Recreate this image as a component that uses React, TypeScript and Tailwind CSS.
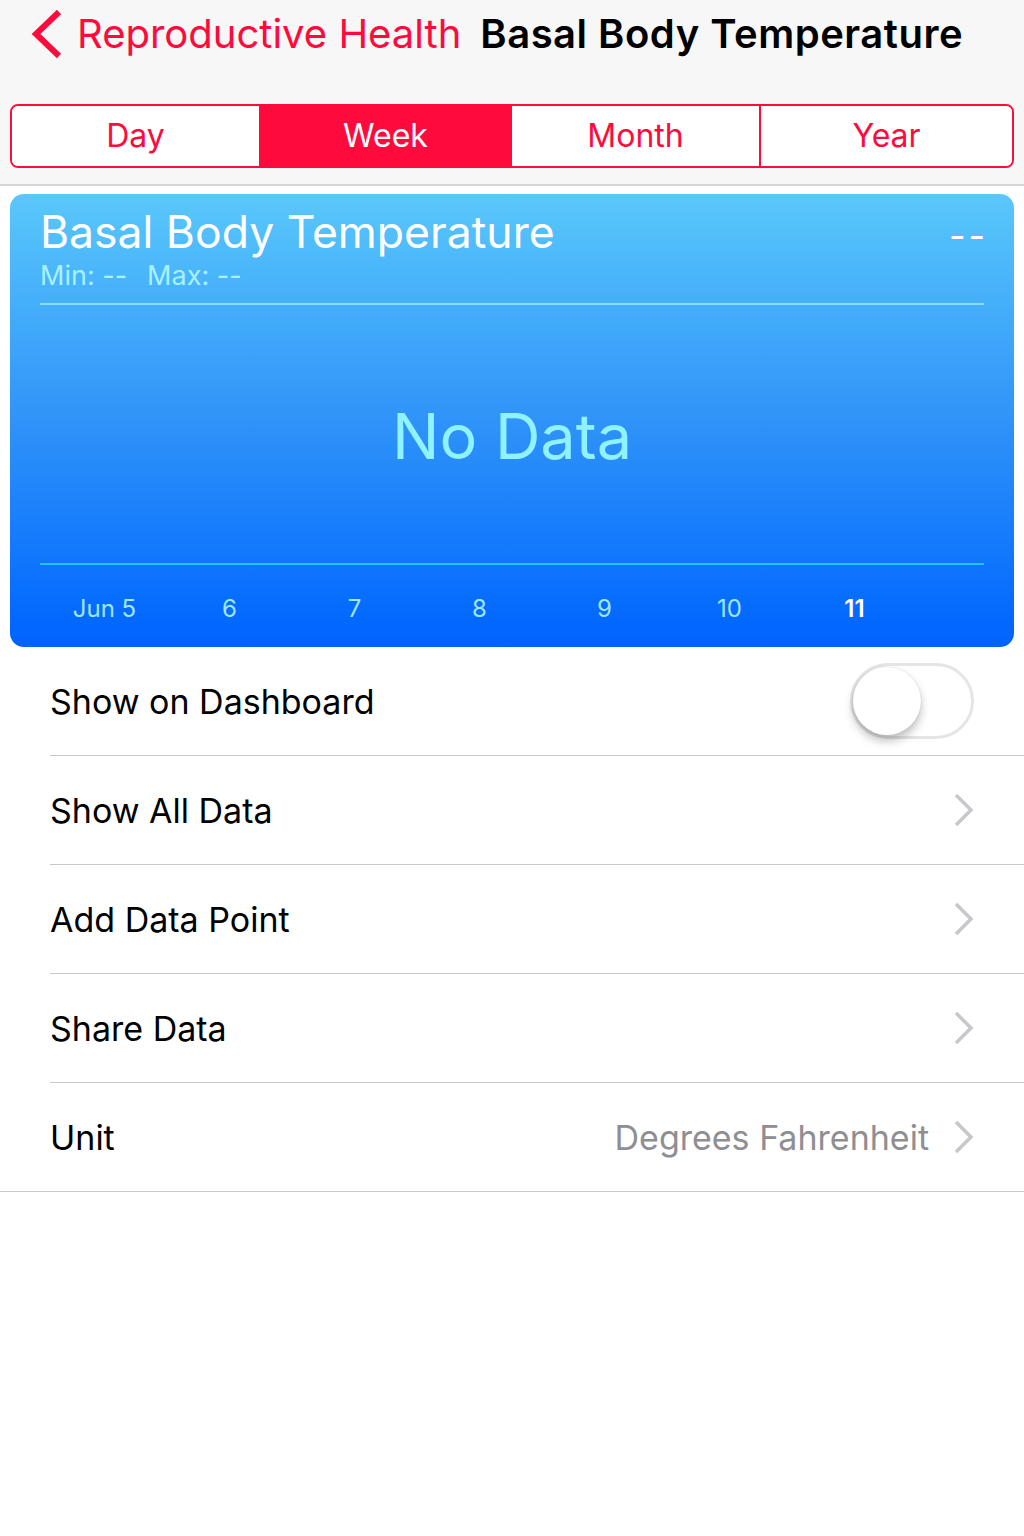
const FONT = { fontFamily: "Inter, 'Noto Sans', sans-serif" };

const days = ["Jun 5", "6", "7", "8", "9", "10", "11"];

function Chevron() {
  return (
    <svg width="22" height="34" viewBox="0 0 22 34" className="shrink-0">
      <path d="M3 2 L18 17 L3 32" fill="none" stroke="#c7c7cc" strokeWidth="3.5" />
    </svg>
  );
}

function Row({ label, value }: { label: string; value?: string }) {
  return (
    <div className="h-[109px] ml-[50px] flex items-center justify-between pr-[49px] border-b border-[#c8c7cc]">
      <span className="text-[34px] text-black">{label}</span>
      <div className="flex items-center gap-[24px]">
        {value && <span className="text-[34px] text-[#8e8e93]">{value}</span>}
        <Chevron />
      </div>
    </div>
  );
}

export default function App() {
  return (
    <div className="w-[1024px] h-[1536px] bg-white" style={FONT}>
      {/* Nav bar + segmented control */}
      <div className="bg-[#f7f7f7] border-b-2 border-[#d6d6d8] h-[186px]">
        <div className="flex items-center h-[68px] pl-[28px]">
          <svg width="36" height="52" viewBox="0 0 36 52" className="shrink-0">
            <path d="M31 4 L8 26 L31 48" fill="none" stroke="#ff0a3c" strokeWidth="6" />
          </svg>
          <span className="ml-[13px] text-[40px] text-[#ff0a3c]">Reproductive Health</span>
          <span className="ml-[19px] text-[40px] font-semibold text-black tracking-[0.5px]">Basal Body Temperature</span>
        </div>
        <div className="mx-[10px] mt-[36px] h-[64px] border-2 border-[#ff0a3c] rounded-[8px] overflow-hidden flex text-[32px] text-[#ff0a3c]">
          <div className="w-[247px] bg-white flex items-center justify-center">Day</div>
          <div className="w-[253px] bg-[#ff0a3c] text-white flex items-center justify-center">Week</div>
          <div className="w-[249px] bg-white flex items-center justify-center border-r-2 border-[#ff0a3c]">Month</div>
          <div className="flex-1 bg-white flex items-center justify-center">Year</div>
        </div>
      </div>

      {/* Chart card */}
      <div className="mx-[10px] mt-[8px] h-[453px] rounded-[14px] bg-gradient-to-b from-[#5ac8fb] via-[#2f93f8] to-[#0062ff] px-[30px] flex flex-col">
        <div className="flex justify-between items-start pt-[8px]">
          <span className="text-[44.5px] leading-[60px] text-white">Basal Body Temperature</span>
          <span className="text-[36px] leading-[60px] text-white mt-[4px] -mr-[4px] tracking-[3px]">--</span>
        </div>
        <div className="flex text-[27px] leading-[30px] text-[#a8f2ff] -mt-[5px]">
          <span>Min: --</span>
          <span className="ml-[20px]">Max: --</span>
        </div>
        <div className="mt-[12px] h-[2px] bg-[#8fdcff]" />
        <div className="flex-1 flex items-center justify-center pt-[4px]">
          <span className="text-[63px] text-[#8ef3ff]">No Data</span>
        </div>
        <div className="h-[2px] bg-[#22c4ff]" />
        <div className="flex pl-[2px] h-[82px] items-center pt-[6px]">
          {days.map((d, i) => (
            <div
              key={d}
              className={
                i === 6
                  ? "w-[125px] text-center text-[24px] text-white font-semibold"
                  : "w-[125px] text-center text-[24px] text-[#9fe6ff]"
              }
            >
              {d}
            </div>
          ))}
        </div>
      </div>

      {/* Settings list */}
      <div className="border-b border-[#c8c7cc]">
        <div className="h-[109px] ml-[50px] flex items-center justify-between pr-[50px] border-b border-[#c8c7cc]">
          <span className="text-[34px] text-black">Show on Dashboard</span>
          <div className="w-[124px] h-[76px] rounded-full border-[3px] border-[#e5e5e5] bg-white relative">
            <div className="absolute left-0 top-[1px] w-[68px] h-[68px] rounded-full bg-white shadow-[0_6px_10px_rgba(0,0,0,0.25),0_0_2px_rgba(0,0,0,0.15)]" />
          </div>
        </div>
        <Row label="Show All Data" />
        <Row label="Add Data Point" />
        <Row label="Share Data" />
        <div className="h-[108px] ml-[50px] flex items-center justify-between pr-[49px]">
          <span className="text-[34px] text-black">Unit</span>
          <div className="flex items-center gap-[24px]">
            <span className="text-[34px] text-[#8e8e93]">Degrees Fahrenheit</span>
            <Chevron />
          </div>
        </div>
      </div>
    </div>
  );
}
